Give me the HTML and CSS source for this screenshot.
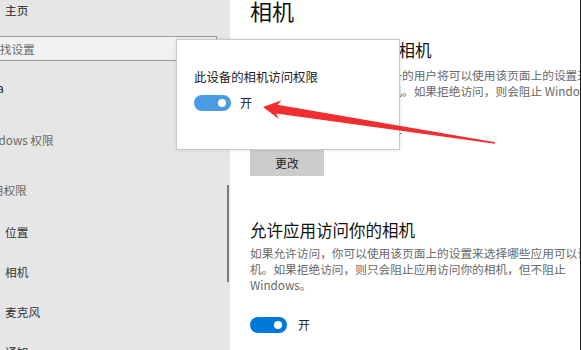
FILE: index.html
```html
<!DOCTYPE html>
<html lang="zh-CN">
<head>
<meta charset="utf-8">
<title>相机</title>
<link rel="stylesheet" href="styles.css">
</head>
<body>
<div class="app">
  <aside class="sidebar">
    <div class="home">主页</div>
    <div class="search">查找设置</div>
    <div class="mark">a</div>
    <div class="group g1">Windows 权限</div>
    <div class="group g2">应用权限</div>
    <ul class="nav">
      <li>位置</li>
      <li>相机</li>
      <li>麦克风</li>
      <li>通知</li>
    </ul>
    <div class="scrollbar"></div>
  </aside>
  <main class="content">
    <h1 class="title">相机</h1>
    <h2 class="heading first">允许访问此设备上的相机</h2>
    <p class="para p1">如果允许访问，使用这台设备的用户将可以使用该页面上的设置来选择应用是否可以访问相机<br>应用是否可以访问设备的相机。如果拒绝访问，则会阻止 Windows 功能、Microsoft Store 应用和大多数桌面应用访问相机。</p>
    <p class="status">此设备的相机访问权限已打开</p>
    <div class="btn">更改</div>
    <h2 class="heading second">允许应用访问你的相机</h2>
    <p class="para p2">如果允许访问，你可以使用该页面上的设置来选择哪些应用可以访问你的相<br>机。如果拒绝访问，则只会阻止应用访问你的相机，但不阻止<br>Windows。</p>
    <div class="switch-row">
      <span class="toggle"><span class="knob"></span></span>
      <span class="switch-label">开</span>
    </div>
  </main>
</div>
<div class="popup">
  <div class="popup-label">此设备的相机访问权限</div>
  <div class="switch-row popup-row">
    <span class="toggle light"><span class="knob"></span></span>
    <span class="switch-label">开</span>
  </div>
</div>
<svg class="arrow" width="581" height="350" viewBox="0 0 581 350">
  <polygon points="263,107 281.7,100.3 277.5,104.7 495.1,142.2 494.9,143.8 276.1,113.6 278.8,119.1" fill="#ef2f2f"/>
</svg>
</body>
</html>
```
FILE: styles.css
```css
html, body {
  margin: 0;
  padding: 0;
}
body {
  width: 581px;
  height: 350px;
  overflow: hidden;
  position: relative;
  background: #fff;
  font-family: "Noto Sans CJK SC", "Noto Sans", sans-serif;
}
.app {
  display: flex;
  height: 350px;
}
.sidebar {
  width: 230px;
  flex: none;
  background: #e6e6e6;
  position: relative;
  overflow: hidden;
}
.home {
  height: 20px;
  line-height: 20px;
  padding-left: 5px;
  font-size: 11.7px;
  color: #222;
}
.search {
  margin-top: 16px;
  width: 217px;
  height: 25px;
  box-sizing: border-box;
  border: 1px solid #9c9c9c;
  border-left: none;
  background: #f1f1f1;
  font-size: 11.7px;
  line-height: 23px;
  color: #6a6a6a;
  text-indent: -12px;
  white-space: nowrap;
  overflow: hidden;
}
.mark {
  margin-top: 17px;
  height: 20px;
  line-height: 20px;
  text-indent: -3px;
  font-size: 12px;
  color: #222;
}
.group {
  height: 20px;
  line-height: 20px;
  font-size: 11.7px;
  color: #6a6a6a;
  white-space: nowrap;
}
.g1 {
  margin-top: 32px;
  text-indent: -22px;
}
.g2 {
  margin-top: 30px;
  text-indent: -20px;
}
.nav {
  list-style: none;
  margin: 12px 0 0;
  padding: 0;
}
.nav li {
  height: 40px;
  line-height: 40px;
  padding-left: 5px;
  font-size: 11.7px;
  color: #333;
}
.scrollbar {
  position: absolute;
  left: 227px;
  top: 185px;
  width: 2px;
  height: 97px;
  background: #7d7d7d;
}
.content {
  width: 351px;
  flex: none;
  box-sizing: border-box;
  padding-left: 20px;
  border-right: 1px solid #1e1e1e;
  overflow: hidden;
}
.title {
  margin: -3px 0 0;
  font-size: 22px;
  line-height: 26px;
  font-weight: normal;
  color: #111;
}
.heading {
  margin: 0;
  font-size: 16.5px;
  line-height: 22px;
  font-weight: normal;
  color: #111;
  white-space: nowrap;
}
.heading.first {
  margin-top: 16px;
}
.heading.second {
  margin-top: 43px;
}
.para {
  margin: 0;
  font-size: 11.7px;
  color: #686868;
  white-space: nowrap;
}
.p1 {
  margin-top: 6px;
  line-height: 15.5px;
}
.p2 {
  margin-top: 4px;
  line-height: 16px;
}
.status {
  margin: 27px 0 0;
  font-size: 11.7px;
  line-height: 16px;
  color: #333;
  white-space: nowrap;
}
.btn {
  margin-top: 9px;
  width: 74px;
  height: 26px;
  line-height: 26px;
  text-align: center;
  background: #cccccc;
  font-size: 11.7px;
  color: #222;
}
.switch-row {
  display: flex;
  align-items: center;
  gap: 11px;
  margin-top: 24px;
}
.toggle {
  width: 37px;
  height: 16px;
  box-sizing: border-box;
  border-radius: 8px;
  background: #0078d7;
  display: flex;
  align-items: center;
  justify-content: flex-end;
  padding-right: 5px;
}
.toggle.light {
  background: #4a9be4;
}
.knob {
  width: 8px;
  height: 8px;
  border-radius: 50%;
  background: #fff;
}
.switch-label {
  font-size: 12px;
  color: #222;
  line-height: 16px;
}
.popup {
  position: absolute;
  left: 176px;
  top: 39px;
  width: 224px;
  height: 111px;
  box-sizing: border-box;
  background: #fff;
  border: 1px solid #c9c9c9;
  box-shadow: 0 0 4px rgba(0, 0, 0, 0.12);
  padding: 29px 0 0 17px;
}
.popup-label {
  font-size: 12.4px;
  line-height: 16px;
  color: #222;
  white-space: nowrap;
}
.popup-row {
  margin-top: 10px;
  gap: 9px;
}
.arrow {
  position: absolute;
  left: 0;
  top: 0;
  pointer-events: none;
}
```
